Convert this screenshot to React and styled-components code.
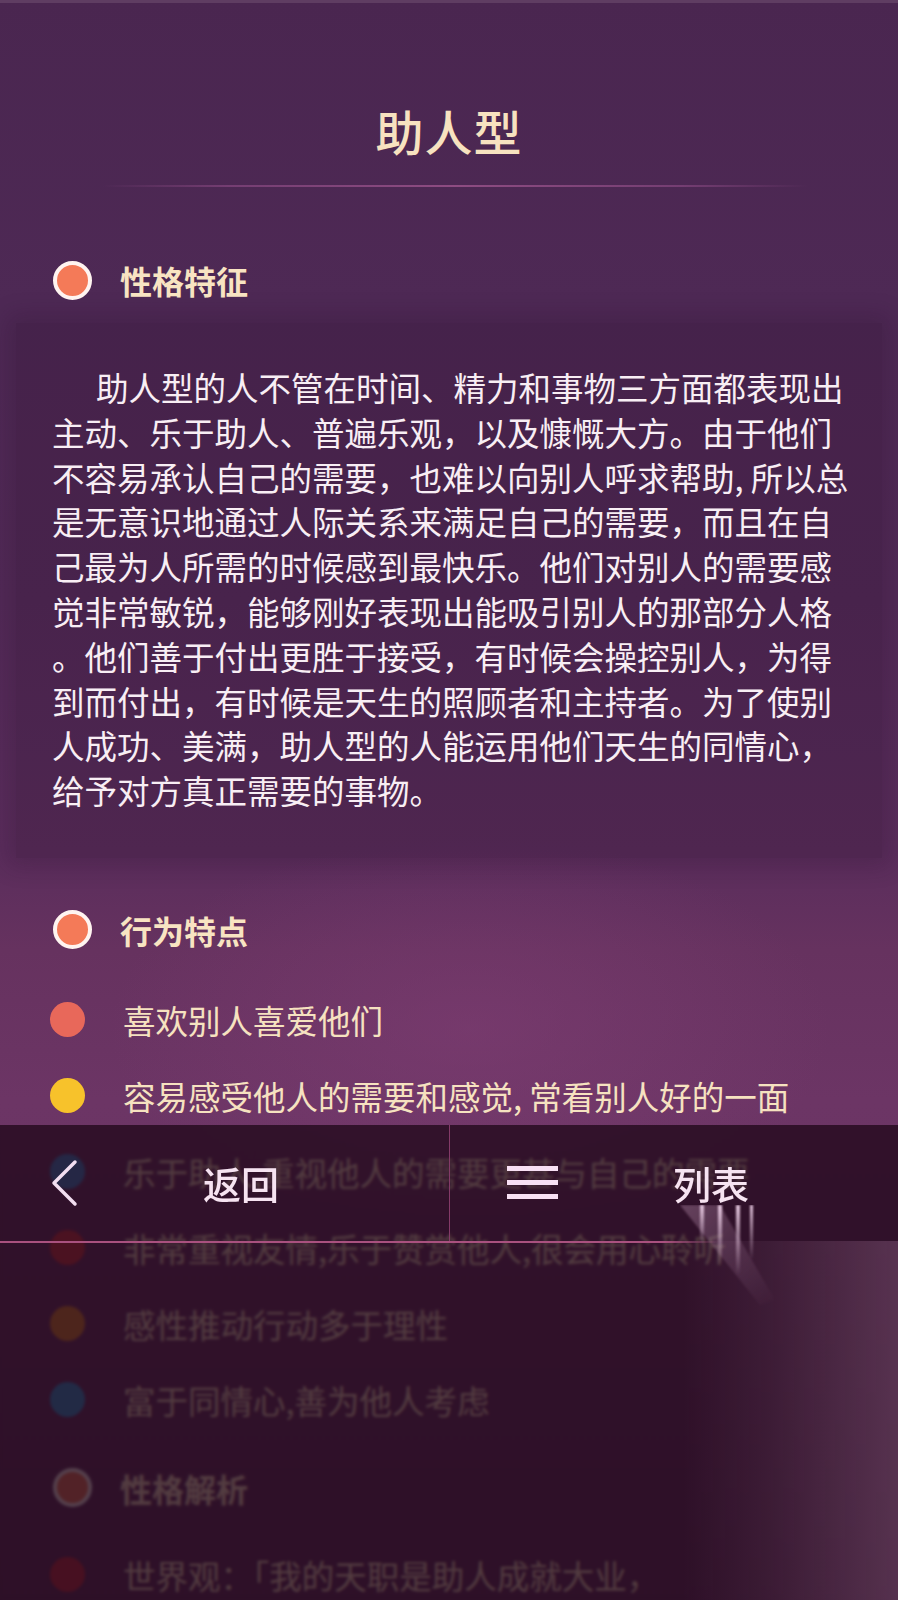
import React from "react";
import styled, { createGlobalStyle } from "styled-components";

const GlobalStyle = createGlobalStyle`
  html, body {
    margin: 0;
    padding: 0;
  }
  body {
    width: 898px;
    height: 1600px;
    overflow: hidden;
    background: #4b2750;
    font-family: "Noto Sans CJK SC", "Noto Sans", sans-serif;
  }
`;

const Page = styled.div`
  position: relative;
  width: 898px;
  height: 1600px;
  overflow: hidden;
  box-shadow: inset 0 3px 0 #5f3d62;
  background:
    radial-gradient(ellipse 480px 260px at 470px 1030px, rgba(128, 62, 116, 0.55), rgba(128, 62, 116, 0) 75%),
    linear-gradient(180deg, #4a2650 0px, #4e2955 300px, #522a57 600px, #5a2d5c 850px, #66325f 950px, #6c3565 1100px, #6a3463 1300px, #5e2e5a 1600px);
`;

const Header = styled.header`
  display: flex;
  flex-direction: column;
  align-items: center;
  padding-top: 97px;
`;

const Title = styled.h1`
  margin: 0;
  font-size: 48px;
  line-height: 66px;
  font-weight: 500;
  color: #f7e2c0;
  letter-spacing: 1px;
`;

const Divider = styled.div`
  align-self: flex-start;
  margin: 22px 0 0 102px;
  width: 706px;
  height: 2px;
  background: linear-gradient(
    90deg,
    rgba(150, 80, 140, 0) 0%,
    rgba(150, 80, 140, 0.55) 18%,
    #8e4c82 50%,
    rgba(150, 80, 140, 0.55) 82%,
    rgba(150, 80, 140, 0) 100%
  );
`;

const SectionHead = styled.div`
  display: flex;
  align-items: center;
  gap: 28px;
  height: 60px;
  margin-top: ${(p) => p.$top}px;
  padding-left: 53px;
`;

const Ring = styled.span`
  flex: none;
  width: 39px;
  height: 39px;
  box-sizing: border-box;
  border-radius: 50%;
  border: 4px solid #fff4f0;
  background: #f47a58;
`;

const SectionTitle = styled.h2`
  margin: 0;
  font-size: 32px;
  line-height: 60px;
  font-weight: 700;
  color: #f8e4c2;
`;

const Panel = styled.div`
  margin: 13px 16px 0;
  padding: 42px 30px 45px 36px;
  background: rgba(36, 8, 36, 0.2);
  box-shadow: 0 0 22px 8px rgba(36, 8, 36, 0.2);
`;

const Line = styled.div`
  font-size: 32.5px;
  line-height: 44.8px;
  color: #f8eef4;
  white-space: nowrap;
  padding-left: ${(p) => (p.$indent ? 44 : 0)}px;
`;

const List = styled.ul`
  list-style: none;
  margin: ${(p) => p.$top}px 0 0;
  padding: 0;
`;

const Item = styled.li`
  display: flex;
  align-items: center;
  gap: 38px;
  height: 76px;
  padding-left: 50px;
  font-size: 32.5px;
  color: #f6e2c0;
  white-space: nowrap;
`;

const Dot = styled.span`
  flex: none;
  width: 35px;
  height: 35px;
  border-radius: 50%;
  background: ${(p) => p.$color};
`;

const Sheet = styled.div`
  position: absolute;
  top: 1125px;
  left: 0;
  right: 0;
  bottom: 0;
  display: flex;
  flex-direction: column;
  background: rgba(30, 6, 24, 0.76);
  backdrop-filter: blur(1.5px);
`;

const Bar = styled.nav`
  position: relative;
  display: grid;
  grid-template-columns: 450px 1fr;
  height: 116px;

  &::after {
    content: "";
    position: absolute;
    left: 0;
    right: 0;
    bottom: -2px;
    height: 2px;
    background: linear-gradient(90deg, #a9517f 0%, #a9517f 74%, rgba(169, 81, 127, 0) 80%);
  }
`;

const NavButton = styled.button`
  display: flex;
  align-items: center;
  padding: 0 0 0 ${(p) => p.$pad}px;
  margin: 0;
  border: none;
  border-right: ${(p) => (p.$divider ? "1.5px solid #843a68" : "none")};
  background: transparent;
  font-family: inherit;
  cursor: pointer;
`;

const Label = styled.span`
  margin-left: ${(p) => p.$gap}px;
  font-size: 38px;
  line-height: 1;
  font-weight: 500;
  color: #f6e3f1;
`;

const SheetBody = styled.div`
  position: relative;
  flex: 1;
  background: linear-gradient(
    90deg,
    rgba(160, 112, 150, 0) 0%,
    rgba(160, 112, 150, 0) 76%,
    rgba(160, 112, 150, 0.12) 86%,
    rgba(170, 120, 160, 0.32) 100%
  );
`;

const Streak = styled.svg`
  position: absolute;
  left: 680px;
  top: -36px;
`;

const paragraph = [
  "助人型的人不管在时间、精力和事物三方面都表现出",
  "主动、乐于助人、普遍乐观，以及慷慨大方。由于他们",
  "不容易承认自己的需要，也难以向别人呼求帮助, 所以总",
  "是无意识地通过人际关系来满足自己的需要，而且在自",
  "己最为人所需的时候感到最快乐。他们对别人的需要感",
  "觉非常敏锐，能够刚好表现出能吸引别人的那部分人格",
  "。他们善于付出更胜于接受，有时候会操控别人，为得",
  "到而付出，有时候是天生的照顾者和主持者。为了使别",
  "人成功、美满，助人型的人能运用他们天生的同情心，",
  "给予对方真正需要的事物。",
];

const behaviours = [
  { text: "喜欢别人喜爱他们", color: "#e8685a" },
  { text: "容易感受他人的需要和感觉, 常看别人好的一面", color: "#f7c22b" },
  { text: "乐于助人,重视他人的需要更甚与自己的需要", color: "#3a8ed4" },
  { text: "非常重视友情,乐于赞赏他人,很会用心聆听", color: "#d8363f" },
  { text: "感性推动行动多于理性", color: "#e0862c" },
  { text: "富于同情心,善为他人考虑", color: "#2f9ad6" },
];

const Chevron = () => (
  <svg width="28" height="48" viewBox="0 0 28 48">
    <path
      d="M25 3 L4 24 L25 45"
      fill="none"
      stroke="#f2def0"
      strokeWidth="3.5"
      strokeLinecap="round"
      strokeLinejoin="round"
    />
  </svg>
);

const Burger = () => (
  <svg width="51" height="34" viewBox="0 0 51 34">
    <rect x="0" y="0" width="51" height="5" fill="#f8e0f4" />
    <rect x="0" y="14" width="51" height="5" fill="#f8e0f4" />
    <rect x="0" y="28" width="51" height="5" fill="#f8e0f4" />
  </svg>
);

const App = () => {
  return (
    <Page>
      <GlobalStyle />
      <Header>
        <Title>助人型</Title>
        <Divider />
      </Header>

      <SectionHead $top={63}>
        <Ring />
        <SectionTitle>性格特征</SectionTitle>
      </SectionHead>
      <Panel>
        {paragraph.map((line, i) => (
          <Line key={i} $indent={i === 0}>
            {line}
          </Line>
        ))}
      </Panel>

      <SectionHead $top={42}>
        <Ring />
        <SectionTitle>行为特点</SectionTitle>
      </SectionHead>
      <List $top={22}>
        {behaviours.map((b) => (
          <Item key={b.text}>
            <Dot $color={b.color} />
            {b.text}
          </Item>
        ))}
      </List>

      <SectionHead $top={20}>
        <Ring />
        <SectionTitle>性格解析</SectionTitle>
      </SectionHead>
      <List $top={19}>
        <Item>
          <Dot $color="#c8303e" />
          世界观：「我的天职是助人成就大业，
        </Item>
      </List>

      <Sheet>
        <Bar>
          <NavButton $pad={50} $divider>
            <Chevron />
            <Label $gap={125}>返回</Label>
          </NavButton>
          <NavButton $pad={57}>
            <Burger />
            <Label $gap={115}>列表</Label>
          </NavButton>
        </Bar>
        <SheetBody>
          <Streak width="110" height="110" viewBox="0 0 110 110">
            <defs>
              <linearGradient id="fall" x1="0" y1="0" x2="0" y2="1">
                <stop offset="0" stopColor="#f6d8f0" stopOpacity="0.9" />
                <stop offset="1" stopColor="#f6d8f0" stopOpacity="0" />
              </linearGradient>
              <linearGradient id="wedge" x1="0" y1="0" x2="1" y2="1">
                <stop offset="0" stopColor="#e6b8dc" stopOpacity="0.3" />
                <stop offset="1" stopColor="#e6b8dc" stopOpacity="0" />
              </linearGradient>
              <filter id="soft">
                <feGaussianBlur stdDeviation="1.2" />
              </filter>
            </defs>
            <polygon points="0,0 40,0 95,95 80,100" fill="url(#wedge)" filter="url(#soft)" />
            <g filter="url(#soft)">
              <rect x="20" y="0" width="4" height="40" fill="url(#fall)" />
              <rect x="38" y="0" width="4" height="60" fill="url(#fall)" />
              <rect x="56" y="0" width="4" height="70" fill="url(#fall)" />
              <rect x="70" y="0" width="3" height="55" fill="url(#fall)" />
            </g>
          </Streak>
        </SheetBody>
      </Sheet>
    </Page>
  );
};

export default App;
